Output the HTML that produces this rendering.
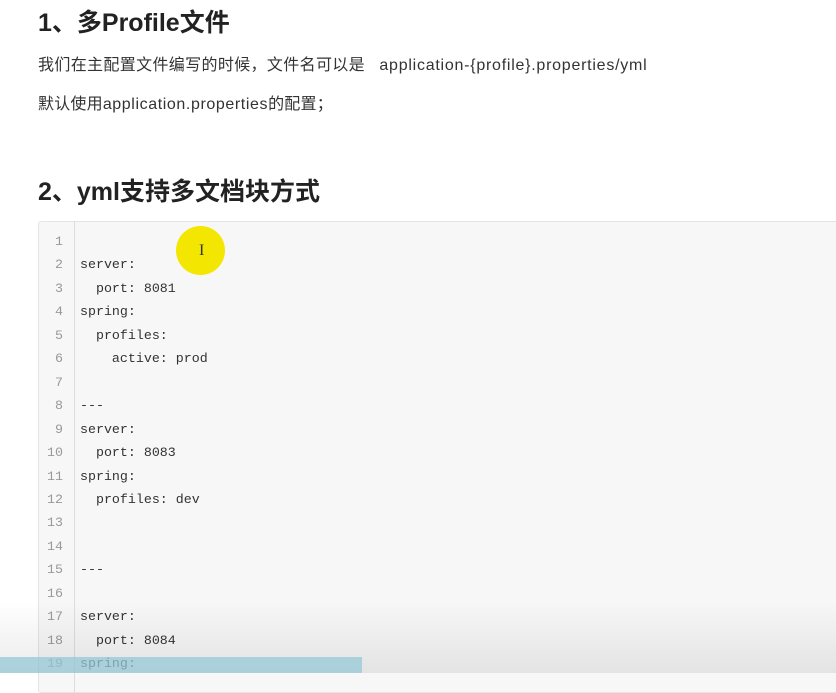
<!DOCTYPE html>
<html><head><meta charset="utf-8"><style>
body{margin:0;width:836px;height:673px;overflow:hidden;background:#fff;font-family:"Liberation Sans","Noto Sans CJK SC",sans-serif;color:#333;position:relative}
h1,h2{margin:0;position:absolute;left:38px;font-size:25px;font-weight:bold;color:#222}
p{margin:0;position:absolute;left:38px;font-size:16px;color:#333;letter-spacing:0.35px;white-space:nowrap}
p span{letter-spacing:0.75px}
p.b{letter-spacing:0.2px}
p.b span{letter-spacing:0.6px}
.code{position:absolute;left:38px;top:221px;width:820px;height:470px;background:#f7f7f7;border:1px solid #e4e4e4;border-radius:3px}
.gut{position:absolute;left:0;top:0;width:35px;height:100%;border-right:1px solid #ddd}
.ln,.cl{position:absolute;font-family:"Liberation Mono",monospace;font-size:13.3px;line-height:23.45px;white-space:pre}
.ln{left:0;width:24px;text-align:right;color:#999;top:8px}
.cl{left:41px;top:8px;color:#333}
.dot{position:absolute;left:176px;top:226px;width:49px;height:49px;border-radius:50%;background:#f3e600}
.shade{position:absolute;left:0;top:600px;width:836px;height:73px;background:linear-gradient(rgba(0,0,0,0),rgba(0,0,0,0.08))}
.blue{position:absolute;left:0;top:657px;width:362px;height:16px;background:rgba(150,200,215,0.75)}
</style></head><body>
<h1 style="top:3px">1、多Profile文件</h1>
<p style="top:51px">我们在主配置文件编写的时候，文件名可以是 &nbsp; <span>application-{profile}.properties/yml</span></p>
<p class="b" style="top:90px">默认使用<span>application.properties</span>的配置；</p>
<h2 style="top:172px">2、yml支持多文档块方式</h2>
<div class="code"><div class="gut"></div>
<div class="ln">1
2
3
4
5
6
7
8
9
10
11
12
13
14
15
16
17
18
19</div>
<div class="cl">
server:
  port: 8081
spring:
  profiles:
    active: prod

---
server:
  port: 8083
spring:
  profiles: dev


---

server:
  port: 8084
spring:</div></div>
<div class="dot"></div>
<div style="position:absolute;left:199px;top:242px;font-family:'Liberation Serif',serif;font-size:16px;color:#333">I</div>
<div class="shade"></div>
<div class="blue"></div>
</body></html>
